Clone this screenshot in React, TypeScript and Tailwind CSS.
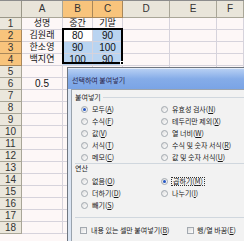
import React from "react"

const data: Record<number, [string, string, string]> = {
  1: ["성명", "중간", "기말"],
  2: ["김원래", "80", "90"],
  3: ["한소영", "90", "100"],
  4: ["백지연", "100", "90"],
  6: ["0.5", "", ""],
}

const rows = Array.from({ length: 18 }, (_, i) => i + 1)
const cols = ["A", "B", "C", "D", "E", "F"]

function Radio({ on }: { on?: boolean }) {
  return (
    <span className="w-[7px] h-[7px] rounded-full border border-[#a3a9b0] bg-linear-to-br from-[#dcdcdc] to-white flex items-center justify-center shrink-0">
      {on && <span className="w-[3px] h-[3px] rounded-full bg-[#2456c4]" />}
    </span>
  )
}

function Check() {
  return <span className="w-[7px] h-[7px] border border-[#a3a9b0] bg-linear-to-br from-[#dcdcdc] to-white shrink-0" />
}

function Opt({ t, k, on, focus }: { t: string; k: string; on?: boolean; focus?: boolean }) {
  return (
    <div className="h-[12px] flex items-center gap-[4px]">
      <Radio on={on} />
      <span className={focus ? "leading-none outline outline-1 outline-dotted outline-[#333] px-[1px]" : "leading-none"}>
        {t}(<span className="underline">{k}</span>)
      </span>
    </div>
  )
}

function Cell({ r, c }: { r: number; c: number }) {
  const text = data[r]?.[c] ?? ""
  const selected = r >= 2 && r <= 4 && (c === 1 || c === 2)
  const active = r === 2 && c === 1
  const bg = active ? "bg-white" : selected ? "bg-[#b9d4f1]" : "bg-[#fdf7f7]"
  const size = /[가-힣]/.test(text) ? "text-[9px]" : "text-[10px]"
  return (
    <div className={`border-r border-b border-[#d6d3dc] flex items-center justify-center leading-none text-[#111] ${bg} ${size}`}>
      {text}
    </div>
  )
}

export default function App() {
  return (
    <div className="relative w-[244px] h-[241px] overflow-hidden bg-[#fdf7f7] font-['Liberation_Sans','Noto_Sans_CJK_KR',sans-serif]">
      {/* sheet */}
      <div className="grid grid-cols-[22px_41px_30px_30px_47px_47px_1fr] grid-rows-[17px_repeat(18,12px)] border-t border-[#8c8c8c]">
        <div className="bg-[#e4e0d4] border-r border-b border-[#9a9788]" />
        {cols.map((c, i) => (
          <div
            key={c}
            className={`border-r border-b flex items-center justify-center text-[10px] leading-none text-[#333] ${
              i === 1 || i === 2 ? "bg-[#f8c47c] border-[#a8875a]" : "bg-[#e9e5da] border-[#a9a698]"
            }`}
          >
            {c}
          </div>
        ))}
        {rows.map((r) => (
          <React.Fragment key={r}>
            <div
              className={`border-r border-b flex items-center justify-center text-[10px] leading-none text-[#333] ${
                r >= 2 && r <= 4 ? "bg-[#f8c47c] border-[#a8875a]" : "bg-[#ebe7dc] border-[#a9a698]"
              }`}
            >
              {r}
            </div>
            {cols.map((_, c) => (
              <Cell key={c} r={r} c={c} />
            ))}
          </React.Fragment>
        ))}
      </div>

      {/* selection border */}
      <div className="absolute left-[62px] top-[28px] w-[61px] h-[36px] border-2 border-black">
        <span className="absolute -right-[3px] -bottom-[3px] w-[4px] h-[4px] bg-black border border-white" />
      </div>

      {/* dialog */}
      <div className="absolute left-[67px] top-[67px] w-[190px] h-[190px] border border-[#6f7680] bg-[#dbe5f3] flex flex-col font-['Noto_Sans_CJK_KR',sans-serif] text-[7px] text-[#1a1a1a]">
        <div className="h-[21px] shrink-0 bg-linear-to-b from-[#b6cff3] via-[#85ace8] to-[#7aa4e6] border-t border-[#e4ecf8] flex items-center pl-[4px] pt-[3px]">
          <span className="text-[7px] leading-none text-[#2a2448]">선택하여 붙여넣기</span>
        </div>
        <div className="flex-1 ml-[3px] border-l border-t border-[#9aa3ad] bg-[#f2f2f2] pl-[3px] pt-[2px]">
          {/* 붙여넣기 */}
          <div className="h-[10px] flex items-center gap-[2px]">
            <span className="leading-none">붙여넣기</span>
            <span className="flex-1 border-t border-[#d0d7de]" />
          </div>
          <div className="mt-[1px] pl-[6px] grid grid-cols-[80px_1fr] border-b border-[#d0d7de]">
            <div>
              <Opt t="모두" k="A" on />
              <Opt t="수식" k="F" />
              <Opt t="값" k="V" />
              <Opt t="서식" k="T" />
              <Opt t="메모" k="C" />
            </div>
            <div>
              <Opt t="유효성 검사" k="N" />
              <Opt t="테두리만 제외" k="X" />
              <Opt t="열 너비" k="W" />
              <Opt t="수식 및 숫자 서식" k="R" />
              <Opt t="값 및 숫자 서식" k="U" />
            </div>
          </div>
          {/* 연산 */}
          <div className="h-[9px] flex items-center">
            <span className="leading-none">연산</span>
          </div>
          <div className="mt-[2px] pb-[6px] pl-[6px] grid grid-cols-[80px_1fr] border-b border-[#d0d7de]">
            <div>
              <Opt t="없음" k="O" />
              <Opt t="더하기" k="D" />
              <Opt t="빼기" k="S" />
            </div>
            <div>
              <Opt t="곱하기" k="M" on focus />
              <Opt t="나누기" k="I" />
            </div>
          </div>
          <div className="h-[24px] flex items-center pl-[5px]">
            <div className="w-[107px] flex items-center gap-[4px]">
              <Check />
              <span className="leading-none whitespace-nowrap">
                내용 있는 셀만 붙여넣기(<span className="underline">B</span>)
              </span>
            </div>
            <div className="flex items-center gap-[3px]">
              <Check />
              <span className="leading-none whitespace-nowrap">
                행/열 바꿈(<span className="underline">E</span>)
              </span>
            </div>
          </div>
        </div>
      </div>
    </div>
  )
}
